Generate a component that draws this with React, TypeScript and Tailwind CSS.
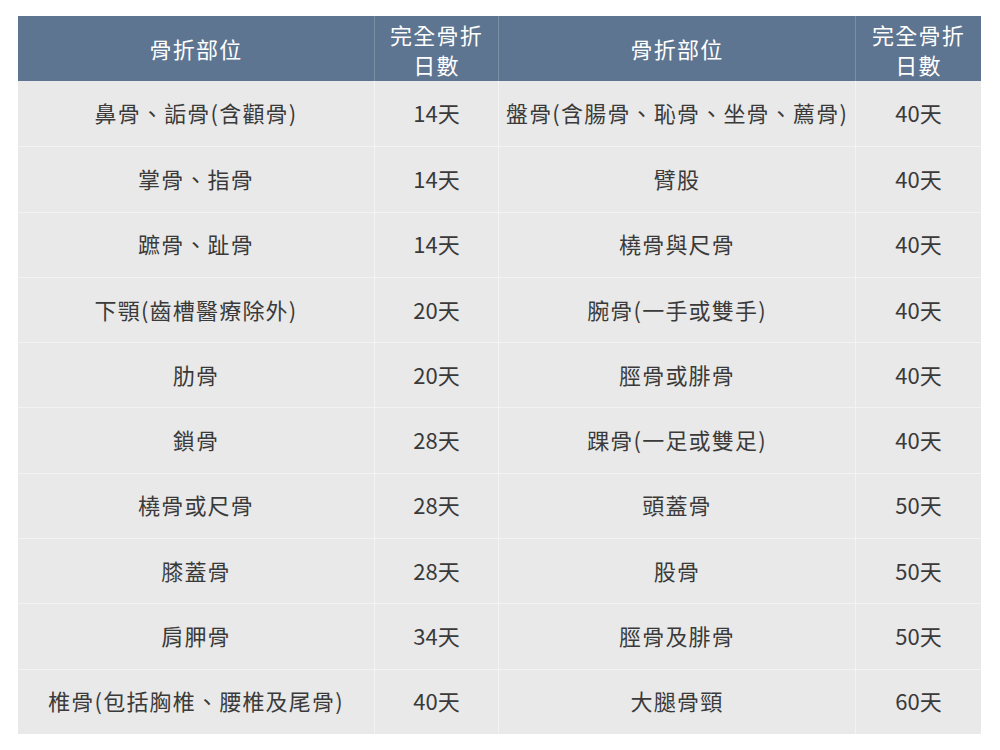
const rows: [string, string, string, string][] = [
  ["鼻骨、詬骨(含顴骨)", "14天", "盤骨(含腸骨、恥骨、坐骨、薦骨)", "40天"],
  ["掌骨、指骨", "14天", "臂股", "40天"],
  ["蹠骨、趾骨", "14天", "橈骨與尺骨", "40天"],
  ["下顎(齒槽醫療除外)", "20天", "腕骨(一手或雙手)", "40天"],
  ["肋骨", "20天", "脛骨或腓骨", "40天"],
  ["鎖骨", "28天", "踝骨(一足或雙足)", "40天"],
  ["橈骨或尺骨", "28天", "頭蓋骨", "50天"],
  ["膝蓋骨", "28天", "股骨", "50天"],
  ["肩胛骨", "34天", "脛骨及腓骨", "50天"],
  ["椎骨(包括胸椎、腰椎及尾骨)", "40天", "大腿骨頸", "60天"],
];

const cols = "grid grid-cols-[357px_124px_357px_125px]";

export default function App() {
  return (
    <div
      className="w-[1000px] h-[750px] bg-white pt-[16px] pl-[18px]"
      style={{ fontFamily: '"Noto Sans CJK TC", "Noto Sans", sans-serif' }}
    >
      <div className="w-[963px]">
        <div className={`${cols} h-[65px] bg-[#5d7590] text-white text-[22px] font-normal leading-[30px] tracking-[1.2px]`}>
          <div className="flex items-center justify-center border-r border-[#7b8fa6] pb-[2px]">骨折部位</div>
          <div className="flex flex-col items-center justify-center border-r border-[#7b8fa6] pt-[1px]">
            <span>完全骨折</span>
            <span>日數</span>
          </div>
          <div className="flex items-center justify-center border-r border-[#7b8fa6] pb-[2px]">骨折部位</div>
          <div className="flex flex-col items-center justify-center pt-[1px]">
            <span>完全骨折</span>
            <span>日數</span>
          </div>
        </div>
        {rows.map((r, i) => (
          <div
            key={i}
            className={`${cols} h-[65.3px] bg-[#e9e9e9] text-[#3a3a3a] text-[22px] ${i > 0 ? "border-t border-[#f3f3f3]" : ""}`}
          >
            <div className="flex items-center justify-center border-r border-[#f3f3f3] whitespace-nowrap tracking-[1.2px] pb-[2px]">{r[0]}</div>
            <div className="flex items-center justify-center border-r border-[#f3f3f3] pb-[2px]">{r[1]}</div>
            <div className="flex items-center justify-center border-r border-[#f3f3f3] whitespace-nowrap tracking-[1.2px] pb-[2px]">{r[2]}</div>
            <div className="flex items-center justify-center pb-[2px]">{r[3]}</div>
          </div>
        ))}
      </div>
    </div>
  );
}
